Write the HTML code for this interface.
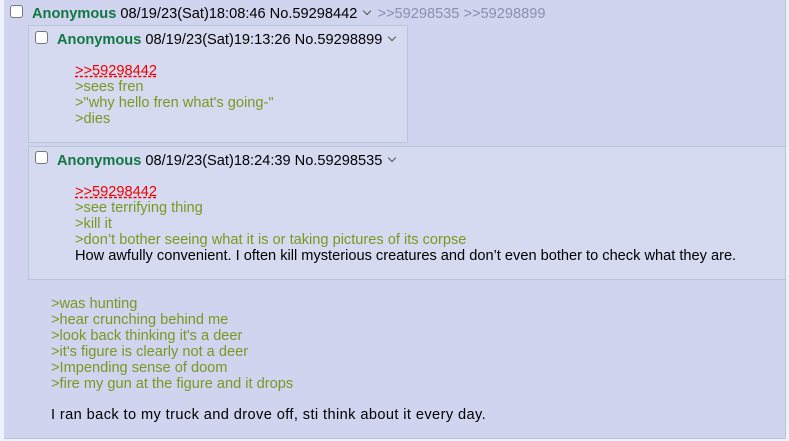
<!DOCTYPE html>
<html><head><style>
body{margin:0;width:789px;height:441px;background:#eef2ff;font-family:"Liberation Sans",Arial,sans-serif;font-size:14.6px;color:#000;position:relative;overflow:hidden}
.outer{position:absolute;left:4px;top:0;width:781px;height:438px;background:#d0d4ee;border-right:1px solid #b7c5d9;border-bottom:1px solid #b7c5d9}
.t{position:absolute;white-space:nowrap;line-height:16px}
.cb{position:absolute;width:11px;height:11px;border:1px solid #777;border-radius:3px;background:#fff}
.name{color:#117743;font-weight:bold}
.g{color:#789922}
.ql{color:#e00;text-decoration:underline dashed #e00}
.gray{color:#8a8fb0}
.box{position:absolute;background:#d6daf0;border:1px solid #b7c5d9}
.chev{display:inline-block;width:5px;height:5px;border-right:1px solid #555;border-bottom:1px solid #555;transform:rotate(45deg);vertical-align:4px;margin:0 3px}
</style></head><body>
<div class="outer"></div>
<div class="cb" style="left:10px;top:5px"></div>
<div class="t" style="left:32px;top:6px"><span class="name">Anonymous</span> 08/19/23(Sat)18:08:46 No.59298442 <span class="chev"></span> <span class="gray">&gt;&gt;59298535 &gt;&gt;59298899</span></div>

<div class="box" style="left:28px;top:25px;width:378px;height:116px"></div>
<div class="cb" style="left:35px;top:31px"></div>
<div class="t" style="left:57px;top:32px"><span class="name">Anonymous</span> 08/19/23(Sat)19:13:26 No.59298899 <span class="chev"></span></div>
<div class="t" style="left:75px;top:63px"><span class="ql">&gt;&gt;59298442</span><br><span class="g">&gt;sees fren<br>&gt;"why hello fren what's going-"<br>&gt;dies</span></div>

<div class="box" style="left:28px;top:146px;width:756px;height:132px"></div>
<div class="cb" style="left:35px;top:151px"></div>
<div class="t" style="left:57px;top:153px"><span class="name">Anonymous</span> 08/19/23(Sat)18:24:39 No.59298535 <span class="chev"></span></div>
<div class="t" style="left:75px;top:184px"><span class="ql">&gt;&gt;59298442</span><br><span class="g">&gt;see terrifying thing<br>&gt;kill it<br>&gt;don’t bother seeing what it is or taking pictures of its corpse</span><br>How awfully convenient. I often kill mysterious creatures and don’t even bother to check what they are.</div>

<div class="t g" style="left:51px;top:296px">&gt;was hunting<br>&gt;hear crunching behind me<br>&gt;look back thinking it's a deer<br>&gt;it's figure is clearly not a deer<br>&gt;Impending sense of doom<br>&gt;fire my gun at the figure and it drops</div>
<div class="t" style="left:51px;top:407px;letter-spacing:0.4px">I ran back to my truck and drove off, sti think about it every day.</div>
</body></html>
